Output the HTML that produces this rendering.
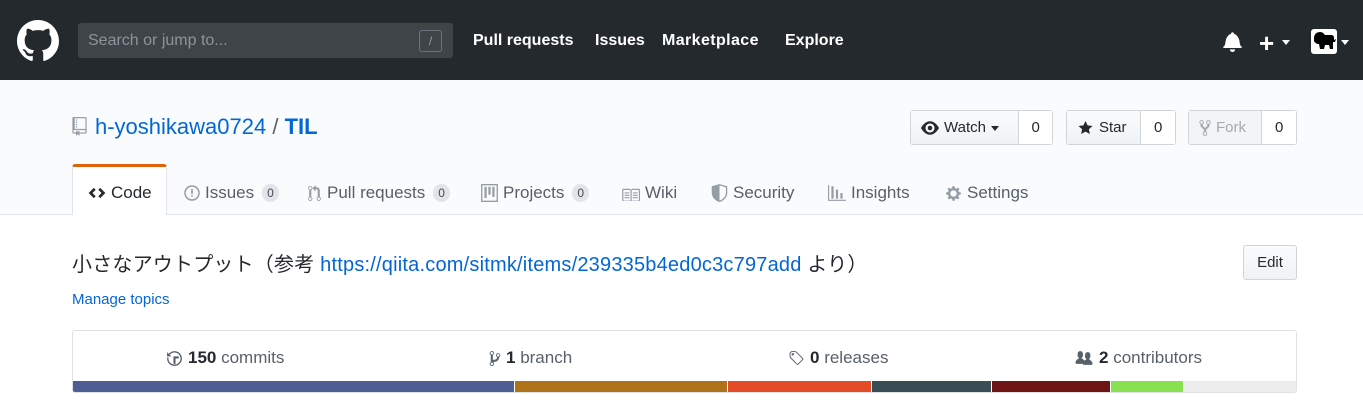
<!DOCTYPE html>
<html><head><meta charset="utf-8"><style>
*{box-sizing:border-box;margin:0;padding:0}
body{width:1363px;height:412px;overflow:hidden;background:#fff;font-family:"Liberation Sans","Noto Sans CJK JP",sans-serif;color:#24292e;position:relative}
.a{position:absolute;white-space:nowrap}
.hdr{position:absolute;left:0;top:0;width:1363px;height:80px;background:#24292e}
.sub{position:absolute;left:0;top:80px;width:1363px;height:135px;background:#fafbfc;border-bottom:1px solid #e1e4e8}
.nav{color:#fff;font-weight:bold;font-size:16px;top:32px}
.tab{top:183px;font-size:17px;color:#586069;display:flex;align-items:center;gap:5px}
.cnt{display:inline-block;background:#e1e4e8;border-radius:10px;font-size:12px;padding:2px 5px;color:#444d56;margin-left:3px}
.btn{position:absolute;top:110px;height:35px;border:1px solid #d1d5da;border-radius:3px;display:flex;font-size:15px}
.btn .l{background:linear-gradient(#fafbfc,#eff3f6);display:flex;align-items:center;gap:5px;padding:0 10px;border-right:1px solid #d1d5da}
.btn .r{background:#fff;display:flex;align-items:center;justify-content:center}
.st{top:348px;font-size:17px;color:#586069;display:flex;align-items:center;gap:5px}
.st b{color:#24292e}
</style></head><body>
<div class="hdr"></div>
<svg class="a" style="left:17px;top:20px" width="42" height="42" viewBox="0 0 16 16"><path fill="#fff" d="M8 0C3.58 0 0 3.58 0 8c0 3.54 2.29 6.53 5.47 7.59.4.07.55-.17.55-.38 0-.19-.01-.82-.01-1.49-2.01.37-2.53-.49-2.69-.94-.09-.23-.48-.94-.82-1.13-.28-.15-.68-.52-.01-.53.63-.01 1.08.58 1.23.82.72 1.21 1.87.87 2.33.66.07-.52.28-.87.51-1.07-1.78-.2-3.64-.89-3.64-3.95 0-.87.31-1.59.82-2.15-.08-.2-.36-1.02.08-2.12 0 0 .67-.21 2.2.82.64-.18 1.32-.27 2-.27.68 0 1.36.09 2 .27 1.53-1.04 2.2-.82 2.2-.82.44 1.1.16 1.92.08 2.12.51.56.82 1.27.82 2.15 0 3.07-1.87 3.75-3.65 3.95.29.25.54.73.54 1.48 0 1.07-.01 1.93-.01 2.2 0 .21.15.46.55.38A8.013 8.013 0 0016 8c0-4.42-3.58-8-8-8z"/></svg>
<div class="a" style="left:78px;top:23px;width:375px;height:35px;background:#3f4448;border-radius:3px"></div>
<div class="a" style="left:88px;top:32px;font-size:16px;color:#8d949b">Search or jump to...</div>
<div class="a" style="left:419px;top:30px;width:23px;height:22px;border:1px solid #6a737d;border-radius:3px;color:#959da5;font-size:12px;text-align:center;line-height:20px">/</div>
<div class="a nav" style="left:473px">Pull requests</div>
<div class="a nav" style="left:595px">Issues</div>
<div class="a nav" style="left:662px;letter-spacing:0.4px">Marketplace</div>
<div class="a nav" style="left:785px">Explore</div>
<svg class="a" style="left:1223px;top:31px" width="19" height="21" viewBox="0 0 14 16"><path fill="#fff" d="M13.99 11.991v1H0v-1l.73-.58c.769-.769.809-2.547 1.189-4.416.77-3.767 4.077-4.996 4.077-4.996 0-.55.45-1 .999-1 .55 0 1 .45 1 1 0 0 3.387 1.229 4.156 4.996.38 1.879.42 3.657 1.19 4.417l.659.58h-.01zM6.995 15.99c1.11 0 1.999-.89 1.999-1.999H4.996c0 1.11.89 1.999 1.999 1.999z"/></svg>
<div class="a" style="left:1259px;top:28px;color:#fff;font-size:26px;font-weight:bold">+</div>
<div class="a" style="left:1282px;top:40px;border:4px solid transparent;border-top:5px solid #fff"></div>
<div class="a" style="left:1311px;top:29px;width:26px;height:25px;background:#fff;border-radius:3px"><svg width="26" height="25" viewBox="0 0 26 25"><path fill="#000" d="M3 9c0-4 3-6 6-6s4 2 5 3h6c2 0 3 1 3 3v2l2-1-1 3h-2v7h-3l-1-4h-4l-1 4H9l-1-5c-2 0-4-1-5-3z"/></svg></div>
<div class="a" style="left:1341px;top:40px;border:4px solid transparent;border-top:5px solid #fff"></div>

<div class="sub"></div>
<svg class="a" style="left:72px;top:117px" width="15" height="19" viewBox="0 0 12 16"><path fill="#959da5" d="M4 9H3V8h1v1zm0-3H3v1h1V6zm0-2H3v1h1V4zm0-2H3v1h1V2zm8-1v12c0 .55-.45 1-1 1H6v2l-1.5-1.5L3 16v-2H1c-.55 0-1-.45-1-1V1c0-.55.45-1 1-1h10c.55 0 1 .45 1 1zm-1 10H1v2h2v-1h3v1h5v-2zm0-10H2v9h9V1z"/></svg>
<div class="a" style="left:95px;top:114px;font-size:22px;color:#0366d6">h-yoshikawa0724 <span style="color:#586069">/</span> <b>TIL</b></div>

<div class="btn" style="left:910px;width:143px"><div class="l" style="width:109px"><svg width="18" height="14" viewBox="0 0 16 12"><path fill="#24292e" d="M8.06 0C3 0 0 6 0 6s3 6 8.06 6C13 12 16 6 16 6s-3-6-7.94-6zM8 10c-2.2 0-4-1.78-4-4 0-2.2 1.8-4 4-4 2.22 0 4 1.8 4 4 0 2.22-1.78 4-4 4zm2-4c0 1.11-.89 2-2 2-1.11 0-2-.89-2-2 0-1.11.89-2 2-2 1.11 0 2 .89 2 2z"/></svg>Watch<span style="border:4px solid transparent;border-top:5px solid #24292e;margin-top:5px"></span></div><div class="r" style="width:33px">0</div></div>
<div class="btn" style="left:1066px;width:110px"><div class="l" style="width:75px"><svg width="17" height="16" viewBox="0 0 14 16"><path fill="#24292e" d="M14 6l-4.9-.64L7 1 4.9 5.36 0 6l3.6 3.26L2.67 14 7 11.67 11.33 14l-.93-4.74L14 6z"/></svg>Star</div><div class="r" style="width:34px">0</div></div>
<div class="btn" style="left:1188px;width:109px"><div class="l" style="width:74px;color:#a3aab1;background:#f3f4f6"><svg width="12" height="18" viewBox="0 0 10 16"><path fill="#a3aab1" d="M8 1a1.993 1.993 0 00-1 3.72V6L5 8 3 6V4.72A1.993 1.993 0 002 1a1.993 1.993 0 00-1 3.72V6.5l3 3v1.78A1.993 1.993 0 005 15a1.993 1.993 0 001-3.72V9.5l3-3V4.72A1.993 1.993 0 008 1zM2 4.2C1.34 4.2.8 3.65.8 3c0-.65.55-1.2 1.2-1.2.65 0 1.2.55 1.2 1.2 0 .65-.55 1.2-1.2 1.2zm3 10c-.66 0-1.2-.55-1.2-1.2 0-.65.55-1.2 1.2-1.2.65 0 1.2.55 1.2 1.2 0 .65-.55 1.2-1.2 1.2zm3-10c-.66 0-1.2-.55-1.2-1.2 0-.65.55-1.2 1.2-1.2.65 0 1.2.55 1.2 1.2 0 .65-.55 1.2-1.2 1.2z"/></svg>Fork</div><div class="r" style="width:34px">0</div></div>

<div class="a" style="left:72px;top:164px;width:95px;height:51px;background:#fff;border:1px solid #e1e4e8;border-top:3px solid #e36209;border-bottom:none;border-radius:3px 3px 0 0"></div>
<div class="a tab" style="left:88px;color:#24292e"><svg width="18" height="14" viewBox="0 0 14 10"><path fill="#24292e" d="M9.5 1L8 2.5 10.5 5 8 7.5 9.5 9l4-4-4-4zm-5 0l-4 4 4 4L6 7.5 3.5 5 6 2.5 4.5 1z"/></svg>Code</div>
<div class="a tab" style="left:184px"><svg width="16" height="16" viewBox="0 0 16 16"><circle cx="8" cy="8" r="7" fill="none" stroke="#959da5" stroke-width="1.5"/><rect x="7.2" y="4" width="1.6" height="5" fill="#959da5"/><rect x="7.2" y="10" width="1.6" height="1.6" fill="#959da5"/></svg>Issues<span class="cnt">0</span></div>
<div class="a tab" style="left:307px"><svg width="15" height="17" viewBox="0 0 12 16"><path fill="#959da5" d="M11 11.28V5c-.03-.78-.34-1.47-.94-2.06C9.46 2.35 8.78 2.03 8 2H7V0L4 3l3 3V4h1c.27.02.48.11.69.31.21.2.3.42.31.69v6.28A1.993 1.993 0 0010 15a1.993 1.993 0 001-3.72zm-1 2.92c-.66 0-1.2-.55-1.2-1.2 0-.65.55-1.2 1.2-1.2.65 0 1.2.55 1.2 1.2 0 .65-.55 1.2-1.2 1.2zM4 3c0-1.11-.89-2-2-2a1.993 1.993 0 00-1 3.72v6.56A1.993 1.993 0 002 15a1.993 1.993 0 001-3.72V4.72c.59-.34 1-.98 1-1.72zm-.8 10c0 .66-.55 1.2-1.2 1.2-.65 0-1.2-.55-1.2-1.2 0-.65.55-1.2 1.2-1.2.65 0 1.2.55 1.2 1.2zM2 4.2C1.34 4.2.8 3.65.8 3c0-.65.55-1.2 1.2-1.2.65 0 1.2.55 1.2 1.2 0 .65-.55 1.2-1.2 1.2z"/></svg>Pull requests<span class="cnt">0</span></div>
<div class="a tab" style="left:481px"><svg width="17" height="18" viewBox="0 0 15 16"><rect x="0.6" y="0.6" width="13.8" height="14.8" fill="none" stroke="#959da5" stroke-width="1.2"/><rect x="3" y="2.5" width="2" height="10" fill="#959da5"/><rect x="6.5" y="2.5" width="2" height="7" fill="#959da5"/><rect x="10" y="2.5" width="2" height="9" fill="#959da5"/></svg>Projects<span class="cnt">0</span></div>
<div class="a tab" style="left:621px"><svg width="19" height="15" viewBox="0 0 16 12"><path fill="#959da5" d="M3 5h4v1H3V5zm0 3h4V7H3v1zm0 2h4V9H3v1zm11-5h-4v1h4V5zm0 2h-4v1h4V7zm0 2h-4v1h4V9zm2-6v9c0 .55-.45 1-1 1H9.5l-1 1-1-1H2c-.55 0-1-.45-1-1V3c0-.55.45-1 1-1h5.5l1 1 1-1H15c.55 0 1 .45 1 1zm-8 .5L7.5 3H2v9h6V3.5zm7-.5H9.5l-.5.5V12h6V3z"/></svg>Wiki</div>
<div class="a tab" style="left:711px"><svg width="17" height="18" viewBox="0 0 14 16"><path fill="none" stroke="#959da5" stroke-width="1.2" d="M7 .7L.7 2.5v5.5C.7 12.3 5.5 15.3 7 15.3s6.3-3 6.3-7.3V2.5z"/><path fill="#959da5" d="M7 .7v14.6C5.5 15.3.7 12.3.7 8V2.5z"/></svg>Security</div>
<div class="a tab" style="left:828px"><svg width="18" height="16" viewBox="0 0 16 14"><path fill="#959da5" d="M16 13v1H0V0h1v13h15zM5 1H3v11h2V1zm4 3H7v8h2V4zm4 3h-2v5h2V7z"/></svg>Insights</div>
<div class="a tab" style="left:945px"><svg width="17" height="17" viewBox="0 0 14 16"><path fill="#959da5" d="M14 8.77v-1.6l-1.94-.64-.45-1.09.88-1.84-1.13-1.13-1.81.91-1.09-.45-.69-1.92h-1.6l-.63 1.94-1.11.45-1.84-.88-1.13 1.13.91 1.81-.45 1.09L0 7.23v1.59l1.94.64.45 1.09-.88 1.84 1.13 1.13 1.81-.91 1.09.45.69 1.92h1.59l.63-1.94 1.11-.45 1.84.88 1.13-1.13-.92-1.81.47-1.09L14 8.75v.02zM7 11c-1.66 0-3-1.34-3-3s1.34-3 3-3 3 1.34 3 3-1.34 3-3 3z"/></svg>Settings</div>

<div class="a" style="left:72px;top:248px;font-size:20px;letter-spacing:0.2px;color:#24292e">小さなアウトプット（参考 <span style="color:#0366d6">https://qiita.com/sitmk/items/239335b4ed0c3c797add</span> より）</div>
<div class="a" style="left:72px;top:291px;font-size:15px;color:#0366d6">Manage topics</div>
<div class="a" style="left:1243px;top:245px;width:54px;height:35px;border:1px solid #d1d5da;border-radius:3px;background:linear-gradient(#fafbfc,#eff3f6);font-size:15px;text-align:center;line-height:33px">Edit</div>

<div class="a" style="left:72px;top:330px;width:1225px;height:63px;border:1px solid #dfe2e5;border-radius:3px;overflow:hidden">
<div style="position:absolute;left:0;bottom:0;width:100%;height:11px;display:flex">
<div style="width:441px;background:#4f5d95"></div><div style="width:1px;background:#fff"></div>
<div style="width:212px;background:#b07219"></div><div style="width:1px;background:#fff"></div>
<div style="width:143px;background:#e34c26"></div><div style="width:1px;background:#fff"></div>
<div style="width:119px;background:#384d54"></div><div style="width:1px;background:#fff"></div>
<div style="width:118px;background:#701516"></div><div style="width:1px;background:#fff"></div>
<div style="width:72px;background:#89e051"></div><div style="width:1px;background:#fff"></div>
<div style="flex:1;background:#ededed"></div></div></div>
<div class="a st" style="left:166px"><svg width="17" height="17" viewBox="0 0 14 16"><path fill="#586069" d="M8 13H6V6h5v2H8v5zM7 1C4.81 1 2.87 2.02 1.59 3.59L0 2v4h4L2.5 4.5C3.55 3.17 5.17 2.3 7 2.3c3.14 0 5.7 2.56 5.7 5.7s-2.56 5.7-5.7 5.7A5.71 5.71 0 011.3 8c0-.34.03-.67.09-1H.08C.03 7.33 0 7.66 0 8c0 3.86 3.14 7 7 7s7-3.14 7-7-3.14-7-7-7z"/></svg><span><b>150</b> commits</span></div>
<div class="a st" style="left:489px"><svg width="12" height="17" viewBox="0 0 10 16"><path fill="#586069" d="M10 5c0-1.11-.89-2-2-2a1.993 1.993 0 00-1 3.72v.3c-.02.52-.23.98-.63 1.38-.4.4-.86.61-1.38.63-.83.02-1.48.16-2 .45V4.72a1.993 1.993 0 00-1-3.72C.88 1 0 1.89 0 3a2 2 0 001 1.72v6.56c-.59.35-1 .99-1 1.72 0 1.11.89 2 2 2 1.11 0 2-.89 2-2 0-.53-.2-1-.53-1.36.09-.06.48-.41.59-.47.25-.11.56-.17.94-.17 1.05-.05 1.950-.45 2.75-1.25S8.95 7.77 9 6.73h-.02C9.59 6.37 10 5.73 10 5zM2 1.8c.66 0 1.2.55 1.2 1.2 0 .65-.55 1.2-1.2 1.2C1.35 4.2.8 3.65.8 3c0-.65.55-1.2 1.2-1.2zm0 12.41c-.66 0-1.2-.55-1.2-1.2 0-.65.55-1.2 1.2-1.2.65 0 1.2.55 1.2 1.2 0 .65-.55 1.2-1.2 1.2zm6-8c-.66 0-1.2-.55-1.2-1.2 0-.65.55-1.2 1.2-1.2.65 0 1.2.55 1.2 1.2 0 .65-.55 1.2-1.2 1.2z"/></svg><span><b>1</b> branch</span></div>
<div class="a st" style="left:788px"><svg width="17" height="17" viewBox="0 0 15 16"><path fill="#586069" d="M7.73 1.73C7.26 1.26 6.62 1 5.96 1H3.5C2.13 1 1 2.13 1 3.5v2.47c0 .66.27 1.3.73 1.77l6.06 6.06c.39.39 1.02.39 1.41 0l4.59-4.59a.996.996 0 000-1.41L7.73 1.73zM2.38 7.09c-.31-.3-.47-.7-.47-1.13V3.5c0-.88.72-1.59 1.59-1.59h2.47c.42 0 .83.16 1.13.47l6.14 6.13-4.73 4.73-6.13-6.15zM3.01 3h2v2H3V3h.01z"/></svg><span><b>0</b> releases</span></div>
<div class="a st" style="left:1074px"><svg width="20" height="17" viewBox="0 0 16 16"><path fill="#586069" d="M16 12.999c0 .439-.45 1-1 1H7.995c-.539 0-.994-.447-.995-.999H1c-.54 0-1-.561-1-1 0-2.634 3-4 3-4s.229-.409 0-1c-.841-.621-1.058-.59-1-3 .058-2.419 1.367-3 2.5-3s2.442.58 2.5 3c.058 2.41-.159 2.379-1 3-.229.59 0 1 0 1s1.549.711 2.42 2.088C9.196 9.369 10 8.999 10 8.999s.229-.409 0-1c-.841-.62-1.058-.59-1-3 .058-2.419 1.367-3 2.5-3s2.437.581 2.495 3c.059 2.41-.158 2.38-1 3-.229.59 0 1 0 1s3.005 1.366 3.005 4z"/></svg><span><b>2</b> contributors</span></div>
</body></html>
